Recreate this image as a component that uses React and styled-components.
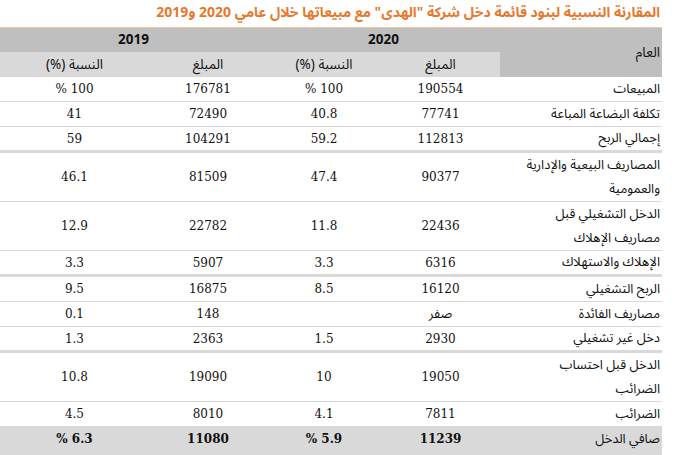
import React from 'react';
import styled, { createGlobalStyle } from 'styled-components';

const AR = '"Noto Sans Arabic", "DejaVu Sans", sans-serif';

const Global = createGlobalStyle`
  html, body { margin: 0; padding: 0; background: #ffffff; }
  body { font-family: ${AR}; color: #111111; }
`;

const Page = styled.div`
  width: 662px;
  direction: rtl;
`;

const Title = styled.h1`
  margin: 0;
  height: 28px;
  box-sizing: border-box;
  border-bottom: 1px solid #f6c7a4;
  padding: 2px 2px 0 0;
  font-family: ${AR};
  font-size: 14px;
  font-weight: bold;
  line-height: 22px;
  color: #e8782c;
  white-space: nowrap;
`;

const Table = styled.table`
  width: 662px;
  border-collapse: collapse;
  table-layout: fixed;
`;

const Col = styled.col`
  width: ${(p) => p.$w}px;
`;

const HeadCell = styled.th`
  padding: 0;
  background: ${(p) => (p.$dark ? '#bfbfbf' : '#d9d9d9')};
  height: ${(p) => p.$h}px;
  font-family: ${AR};
  font-size: 13.5px;
  font-weight: ${(p) => (p.$year ? 'bold' : 'normal')};
  line-height: 20px;
  text-align: ${(p) => (p.$label ? 'right' : 'center')};
  padding-right: ${(p) => (p.$label ? '2px' : '0')};
  vertical-align: middle;
  white-space: nowrap;
`;

const Row = styled.tr`
  background: ${(p) => (p.$total ? '#d9d9d9' : '#ffffff')};
  border-bottom: ${(p) =>
    p.$total ? 'none' : p.$thick ? '3px solid #d9d9d9' : '1px solid #d9d9d9'};

  & > td {
    padding-bottom: ${(p) => (p.$total ? '4px' : '0')};
  }
`;

const LabelCell = styled.td`
  padding-top: 0;
  padding-left: 0;
  padding-right: 2px;
  text-align: right;
  font-family: ${AR};
  font-size: 13px;
  line-height: ${(p) => (p.$thick ? '23px' : '24px')};
  vertical-align: middle;
  white-space: nowrap;
`;

const NumCell = styled.td`
  padding-top: 0;
  padding-left: 0;
  padding-right: 0;
  text-align: center;
  vertical-align: middle;
  font-family: ${(p) => (p.$ar ? AR : '"DejaVu Serif", serif')};
  font-size: ${(p) => (p.$ar ? '13px' : '12px')};
  font-weight: ${(p) => (p.$bold ? 'bold' : 'normal')};
  line-height: 20px;
  white-space: nowrap;
`;

const rows = [
  { label: ['المبيعات'], a20: '190554', p20: '100 %', a19: '176781', p19: '100 %' },
  { label: ['تكلفة البضاعة المباعة'], a20: '77741', p20: '40.8', a19: '72490', p19: '41' },
  { label: ['إجمالي الربح'], a20: '112813', p20: '59.2', a19: '104291', p19: '59', thick: true },
  { label: ['المصاريف البيعية والإدارية', 'والعمومية'], a20: '90377', p20: '47.4', a19: '81509', p19: '46.1' },
  { label: ['الدخل التشغيلي قبل', 'مصاريف الإهلاك'], a20: '22436', p20: '11.8', a19: '22782', p19: '12.9' },
  { label: ['الإهلاك والاستهلاك'], a20: '6316', p20: '3.3', a19: '5907', p19: '3.3', thick: true },
  { label: ['الربح التشغيلي'], a20: '16120', p20: '8.5', a19: '16875', p19: '9.5' },
  { label: ['مصاريف الفائدة'], a20: 'صفر', ar: true, p20: '', a19: '148', p19: '0.1' },
  { label: ['دخل غير تشغيلي'], a20: '2930', p20: '1.5', a19: '2363', p19: '1.3', thick: true },
  { label: ['الدخل قبل احتساب', 'الضرائب'], a20: '19050', p20: '10', a19: '19090', p19: '10.8' },
  { label: ['الضرائب'], a20: '7811', p20: '4.1', a19: '8010', p19: '4.5' },
  { label: ['صافي الدخل'], a20: '11239', p20: '5.9 %', a19: '11080', p19: '6.3 %', total: true },
];

export default function App() {
  return (
    <Page>
      <Global />
      <Title>المقارنة النسبية لبنود قائمة دخل شركة "الهدى" مع مبيعاتها خلال عامي 2020 و2019</Title>
      <Table>
        <colgroup>
          <Col $w={162} />
          <Col $w={119} />
          <Col $w={114} />
          <Col $w={118} />
          <Col $w={149} />
        </colgroup>
        <thead>
          <tr>
            <HeadCell rowSpan={2} $dark $label $h={24}>العام</HeadCell>
            <HeadCell colSpan={2} $dark $year $h={24}>2020</HeadCell>
            <HeadCell colSpan={2} $dark $year $h={24}>2019</HeadCell>
          </tr>
          <tr>
            <HeadCell $h={25}>المبلغ</HeadCell>
            <HeadCell $h={25}>النسبة (%)</HeadCell>
            <HeadCell $h={25}>المبلغ</HeadCell>
            <HeadCell $h={25}>النسبة (%)</HeadCell>
          </tr>
        </thead>
        <tbody>
          {rows.map((r, i) => (
            <Row key={i} $thick={r.thick} $total={r.total}>
              <LabelCell $thick={r.thick}>
                {r.label.map((l, j) => (
                  <React.Fragment key={j}>
                    {j > 0 && <br />}
                    {l}
                  </React.Fragment>
                ))}
              </LabelCell>
              <NumCell $ar={r.ar} $bold={r.total}>{r.a20}</NumCell>
              <NumCell $bold={r.total}>{r.p20}</NumCell>
              <NumCell $bold={r.total}>{r.a19}</NumCell>
              <NumCell $bold={r.total}>{r.p19}</NumCell>
            </Row>
          ))}
        </tbody>
      </Table>
    </Page>
  );
}
